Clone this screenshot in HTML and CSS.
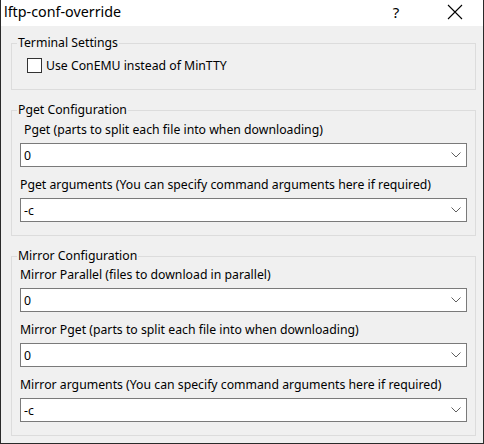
FILE: index.html
```html
<!DOCTYPE html>
<html lang="en">
<head>
<meta charset="utf-8">
<title>lftp-conf-override</title>
<link rel="stylesheet" href="styles.css">
</head>
<body>
<div class="window">
  <div class="titlebar">
    <span class="title">lftp-conf-override</span>
    <div class="title-buttons">
      <span class="help">?</span>
      <span class="close">
        <svg width="16" height="16" viewBox="0 0 16 16"><path d="M1 1 L15 15 M15 1 L1 15" stroke="#000" stroke-width="1.1" fill="none"/></svg>
      </span>
    </div>
  </div>
  <div class="content">
    <fieldset class="group group-terminal">
      <legend>Terminal Settings</legend>
      <label class="check-row">
        <span class="checkbox"></span>
        <span>Use ConEMU instead of MinTTY</span>
      </label>
    </fieldset>

    <fieldset class="group">
      <legend>Pget Configuration</legend>
      <div class="field">
        <div class="label indent">Pget (parts to split each file into when downloading)</div>
        <div class="combo"><span>0</span><svg class="chev" width="10" height="6" viewBox="0 0 10 6"><path d="M0.5 0.5 L5 5 L9.5 0.5" stroke="#606060" fill="none"/></svg></div>
      </div>
      <div class="field">
        <div class="label">Pget arguments (You can specify command arguments here if required)</div>
        <div class="combo"><span>-c</span><svg class="chev" width="10" height="6" viewBox="0 0 10 6"><path d="M0.5 0.5 L5 5 L9.5 0.5" stroke="#606060" fill="none"/></svg></div>
      </div>
    </fieldset>

    <fieldset class="group group-mirror">
      <legend>Mirror Configuration</legend>
      <div class="field">
        <div class="label">Mirror Parallel (files to download in parallel)</div>
        <div class="combo"><span>0</span><svg class="chev" width="10" height="6" viewBox="0 0 10 6"><path d="M0.5 0.5 L5 5 L9.5 0.5" stroke="#606060" fill="none"/></svg></div>
      </div>
      <div class="field">
        <div class="label">Mirror Pget (parts to split each file into when downloading)</div>
        <div class="combo"><span>0</span><svg class="chev" width="10" height="6" viewBox="0 0 10 6"><path d="M0.5 0.5 L5 5 L9.5 0.5" stroke="#606060" fill="none"/></svg></div>
      </div>
      <div class="field">
        <div class="label">Mirror arguments (You can specify command arguments here if required)</div>
        <div class="combo"><span>-c</span><svg class="chev" width="10" height="6" viewBox="0 0 10 6"><path d="M0.5 0.5 L5 5 L9.5 0.5" stroke="#606060" fill="none"/></svg></div>
      </div>
    </fieldset>
  </div>
</div>
</body>
</html>
```
FILE: styles.css
```css
html, body {
  margin: 0;
  padding: 0;
  background: #f0f0f0;
}

body {
  font-family: "Noto Sans", "Liberation Sans", Arial, sans-serif;
  font-size: 12.25px;
  color: #000;
}

.window {
  width: 482px;
  height: 443px;
  border: 1px solid #2a2a2a;
  border-top: none;
  background: #f0f0f0;
  display: flex;
  flex-direction: column;
}

.titlebar {
  height: 26px;
  background: #fff;
  display: flex;
  align-items: center;
  justify-content: space-between;
  flex-shrink: 0;
}

.title {
  font-size: 14.3px;
  padding-left: 3px;
  line-height: 26px;
  padding-bottom: 3px;
}

.title-buttons {
  display: flex;
  align-items: center;
  height: 26px;
}

.help {
  font-size: 15px;
  width: 30px;
  text-align: center;
  margin-right: 36px;
  padding-bottom: 3px;
}

.close {
  display: flex;
  align-items: center;
  justify-content: center;
  width: 16px;
  margin-right: 20px;
  padding-bottom: 3px;
}

.content {
  padding: 9px 7px 0 10px;
  display: flex;
  flex-direction: column;
  gap: 12px;
}

.group {
  margin: 0;
  border: 1px solid #dcdcdc;
  padding: 4px 8px 13px 8px;
  min-width: 0;
}

.group legend {
  padding: 0 1px;
  margin-left: -3px;
  line-height: 16px;
}

.group-terminal {
  padding-top: 7px;
  padding-bottom: 16px;
}

.group-mirror {
  padding-top: 3px;
}

.check-row {
  display: flex;
  align-items: center;
  gap: 4px;
  padding-left: 7px;
  height: 15px;
}

.checkbox {
  width: 13px;
  height: 13px;
  border: 1px solid #333;
  background: #fff;
  flex-shrink: 0;
}

.field + .field {
  margin-top: 10px;
}

.label {
  line-height: 16px;
  margin-bottom: 5px;
  white-space: nowrap;
}

.label.indent {
  padding-left: 4px;
}

.combo {
  height: 22px;
  border: 1px solid #7a7a7a;
  background: #fff;
  display: flex;
  align-items: center;
  justify-content: space-between;
  padding: 0 5px 0 3px;
}

.chev {
  display: block;
}
```
